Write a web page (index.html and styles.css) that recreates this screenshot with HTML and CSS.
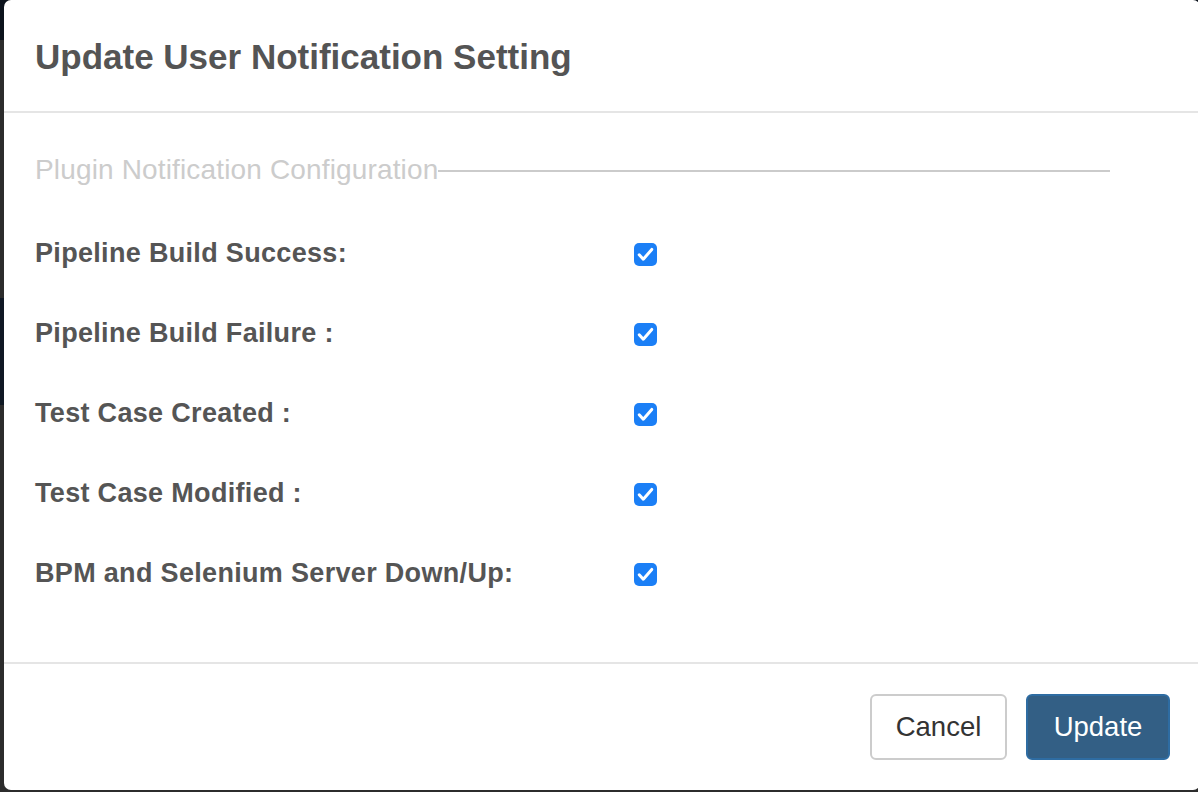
FILE: index.html
```html
<!DOCTYPE html>
<html lang="en">
<head>
<meta charset="utf-8">
<title>Update User Notification Setting</title>
<link rel="stylesheet" href="styles.css">
</head>
<body>
<div class="modal">
  <div class="modal-header">
    <h4 class="modal-title">Update User Notification Setting</h4>
  </div>
  <div class="modal-body">
    <div class="legend"><span class="legend-text">Plugin Notification Configuration</span><span class="legend-line"></span></div>
    <div class="rows">
      <div class="row"><label class="label">Pipeline Build Success:</label><span class="check"><svg viewBox="0 0 23 23" width="23" height="23"><rect width="23" height="23" rx="5" fill="#1b7ff6"/><path d="M5.2 11.8 L9.3 16.2 L17.8 6.4" fill="none" stroke="#fff" stroke-width="3" stroke-linecap="round" stroke-linejoin="round"/></svg></span></div>
      <div class="row"><label class="label">Pipeline Build Failure :</label><span class="check"><svg viewBox="0 0 23 23" width="23" height="23"><rect width="23" height="23" rx="5" fill="#1b7ff6"/><path d="M5.2 11.8 L9.3 16.2 L17.8 6.4" fill="none" stroke="#fff" stroke-width="3" stroke-linecap="round" stroke-linejoin="round"/></svg></span></div>
      <div class="row"><label class="label">Test Case Created :</label><span class="check"><svg viewBox="0 0 23 23" width="23" height="23"><rect width="23" height="23" rx="5" fill="#1b7ff6"/><path d="M5.2 11.8 L9.3 16.2 L17.8 6.4" fill="none" stroke="#fff" stroke-width="3" stroke-linecap="round" stroke-linejoin="round"/></svg></span></div>
      <div class="row"><label class="label">Test Case Modified :</label><span class="check"><svg viewBox="0 0 23 23" width="23" height="23"><rect width="23" height="23" rx="5" fill="#1b7ff6"/><path d="M5.2 11.8 L9.3 16.2 L17.8 6.4" fill="none" stroke="#fff" stroke-width="3" stroke-linecap="round" stroke-linejoin="round"/></svg></span></div>
      <div class="row"><label class="label">BPM and Selenium Server Down/Up:</label><span class="check"><svg viewBox="0 0 23 23" width="23" height="23"><rect width="23" height="23" rx="5" fill="#1b7ff6"/><path d="M5.2 11.8 L9.3 16.2 L17.8 6.4" fill="none" stroke="#fff" stroke-width="3" stroke-linecap="round" stroke-linejoin="round"/></svg></span></div>
    </div>
  </div>
  <div class="modal-footer">
    <button class="btn btn-default" type="button">Cancel</button>
    <button class="btn btn-primary" type="button">Update</button>
  </div>
</div>
</body>
</html>
```

FILE: styles.css
```css
html, body {
  margin: 0;
  padding: 0;
  height: 792px;
  overflow: hidden;
}
body {
  font-family: "Liberation Sans", Arial, Helvetica, sans-serif;
  background: linear-gradient(to bottom, #0c131c 0, #0c131c 40px, #2c2c2c 40px, #2c2c2c 298px, #0f1824 298px, #0f1824 405px, #2c2c2c 405px);
}
.modal {
  margin-left: 4px;
  width: 1196px;
  height: 790px;
  background: #fff;
  border-radius: 7px;
  display: flex;
  flex-direction: column;
  box-sizing: border-box;
}
.modal-header {
  padding: 37px 31px 34px;
  border-bottom: 2px solid #e5e5e5;
}
.modal-title {
  margin: 0;
  font-size: 35px;
  line-height: 40px;
  font-weight: bold;
  color: #545454;
  letter-spacing: 0;
}
.modal-body {
  flex: 1;
  padding: 41px 31px 0;
}
.legend {
  display: flex;
  align-items: center;
  width: 1075px;
  height: 32px;
}
.legend-text {
  font-size: 28px;
  line-height: 32px;
  color: #cccccc;
  white-space: nowrap;
  letter-spacing: 0.15px;
}
.legend-line {
  flex: 1;
  height: 2px;
  margin-top: 2px;
  background: #cbcbcb;
}
.rows {
  margin-top: 27px;
}
.row {
  display: grid;
  grid-template-columns: 599px auto;
  align-items: center;
  height: 80px;
}
.label {
  font-size: 27px;
  line-height: 32px;
  font-weight: bold;
  color: #555555;
  letter-spacing: 0.32px;
}
.check {
  display: block;
  width: 23px;
  height: 23px;
  margin-top: 3px;
}
.check svg {
  display: block;
}
.modal-footer {
  border-top: 2px solid #e5e5e5;
  padding: 30px 30px 30px;
  display: flex;
  justify-content: flex-end;
  gap: 19px;
}
.btn {
  height: 66px;
  border-radius: 6px;
  font-family: "Liberation Sans", Arial, Helvetica, sans-serif;
  font-size: 27.5px;
  border: 2px solid;
  padding: 0;
  cursor: pointer;
}
.btn-default {
  width: 137px;
  background: #fff;
  border-color: #cccccc;
  color: #333333;
}
.btn-primary {
  width: 144px;
  background: #335f85;
  border-color: #2e6ca2;
  color: #ffffff;
}
```
